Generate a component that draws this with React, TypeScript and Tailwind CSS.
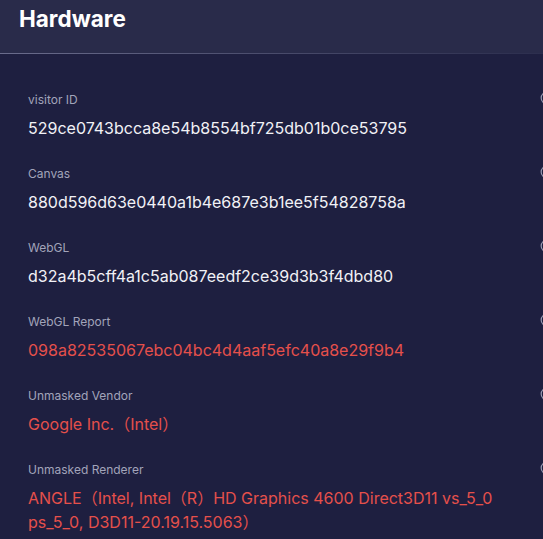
import { Info } from "lucide-react";

const rows = [
  { label: "visitor ID", value: "529ce0743bcca8e54b8554bf725db01b0ce53795", warn: false },
  { label: "Canvas", value: "880d596d63e0440a1b4e687e3b1ee5f54828758a", warn: false },
  { label: "WebGL", value: "d32a4b5cff4a1c5ab087eedf2ce39d3b3f4dbd80", warn: false },
  { label: "WebGL Report", value: "098a82535067ebc04bc4d4aaf5efc40a8e29f9b4", warn: true },
  { label: "Unmasked Vendor", value: "Google Inc.（Intel）", warn: true },
  {
    label: "Unmasked Renderer",
    value: "ANGLE（Intel, Intel（R）HD Graphics 4600 Direct3D11 vs_5_0 ps_5_0, D3D11-20.19.15.5063）",
    warn: true,
  },
];

export default function App() {
  return (
    <div className="w-[543px] h-[539px] overflow-hidden bg-[#1e1f40] font-['Inter','Noto_Sans_CJK_SC',sans-serif]">
      <div className="bg-[#292b4a]">
        <h1 className="h-[53px] pt-[5px] pl-[19px] text-[22.5px] leading-[28px] font-bold text-white">
          Hardware
        </h1>
        <div className="h-px bg-gradient-to-r from-[#6a6c8c] via-[#4a4c6c] to-[#2c2e4e]"></div>
      </div>

      <div className="pl-[28px] pt-[38px] flex flex-col gap-[26px]">
        {rows.map((row) => (
          <div key={row.label} className="flex items-start">
            <div className="flex-1 min-w-0">
              <p className="text-[12px] leading-[16px] text-[#a2a4ba]">{row.label}</p>
              <p
                className={`mt-[8px] max-w-[470px] text-[16px] leading-[24px] ${
                  row.warn ? "text-[#e5504b]" : "text-[#f1f1f6]"
                }`}
              >
                {row.value}
              </p>
            </div>
            <Info className="w-[14px] h-[14px] shrink-0 mr-[-11px] mt-[-1px] text-[#9a9cb4]" />
          </div>
        ))}
      </div>
    </div>
  );
}
